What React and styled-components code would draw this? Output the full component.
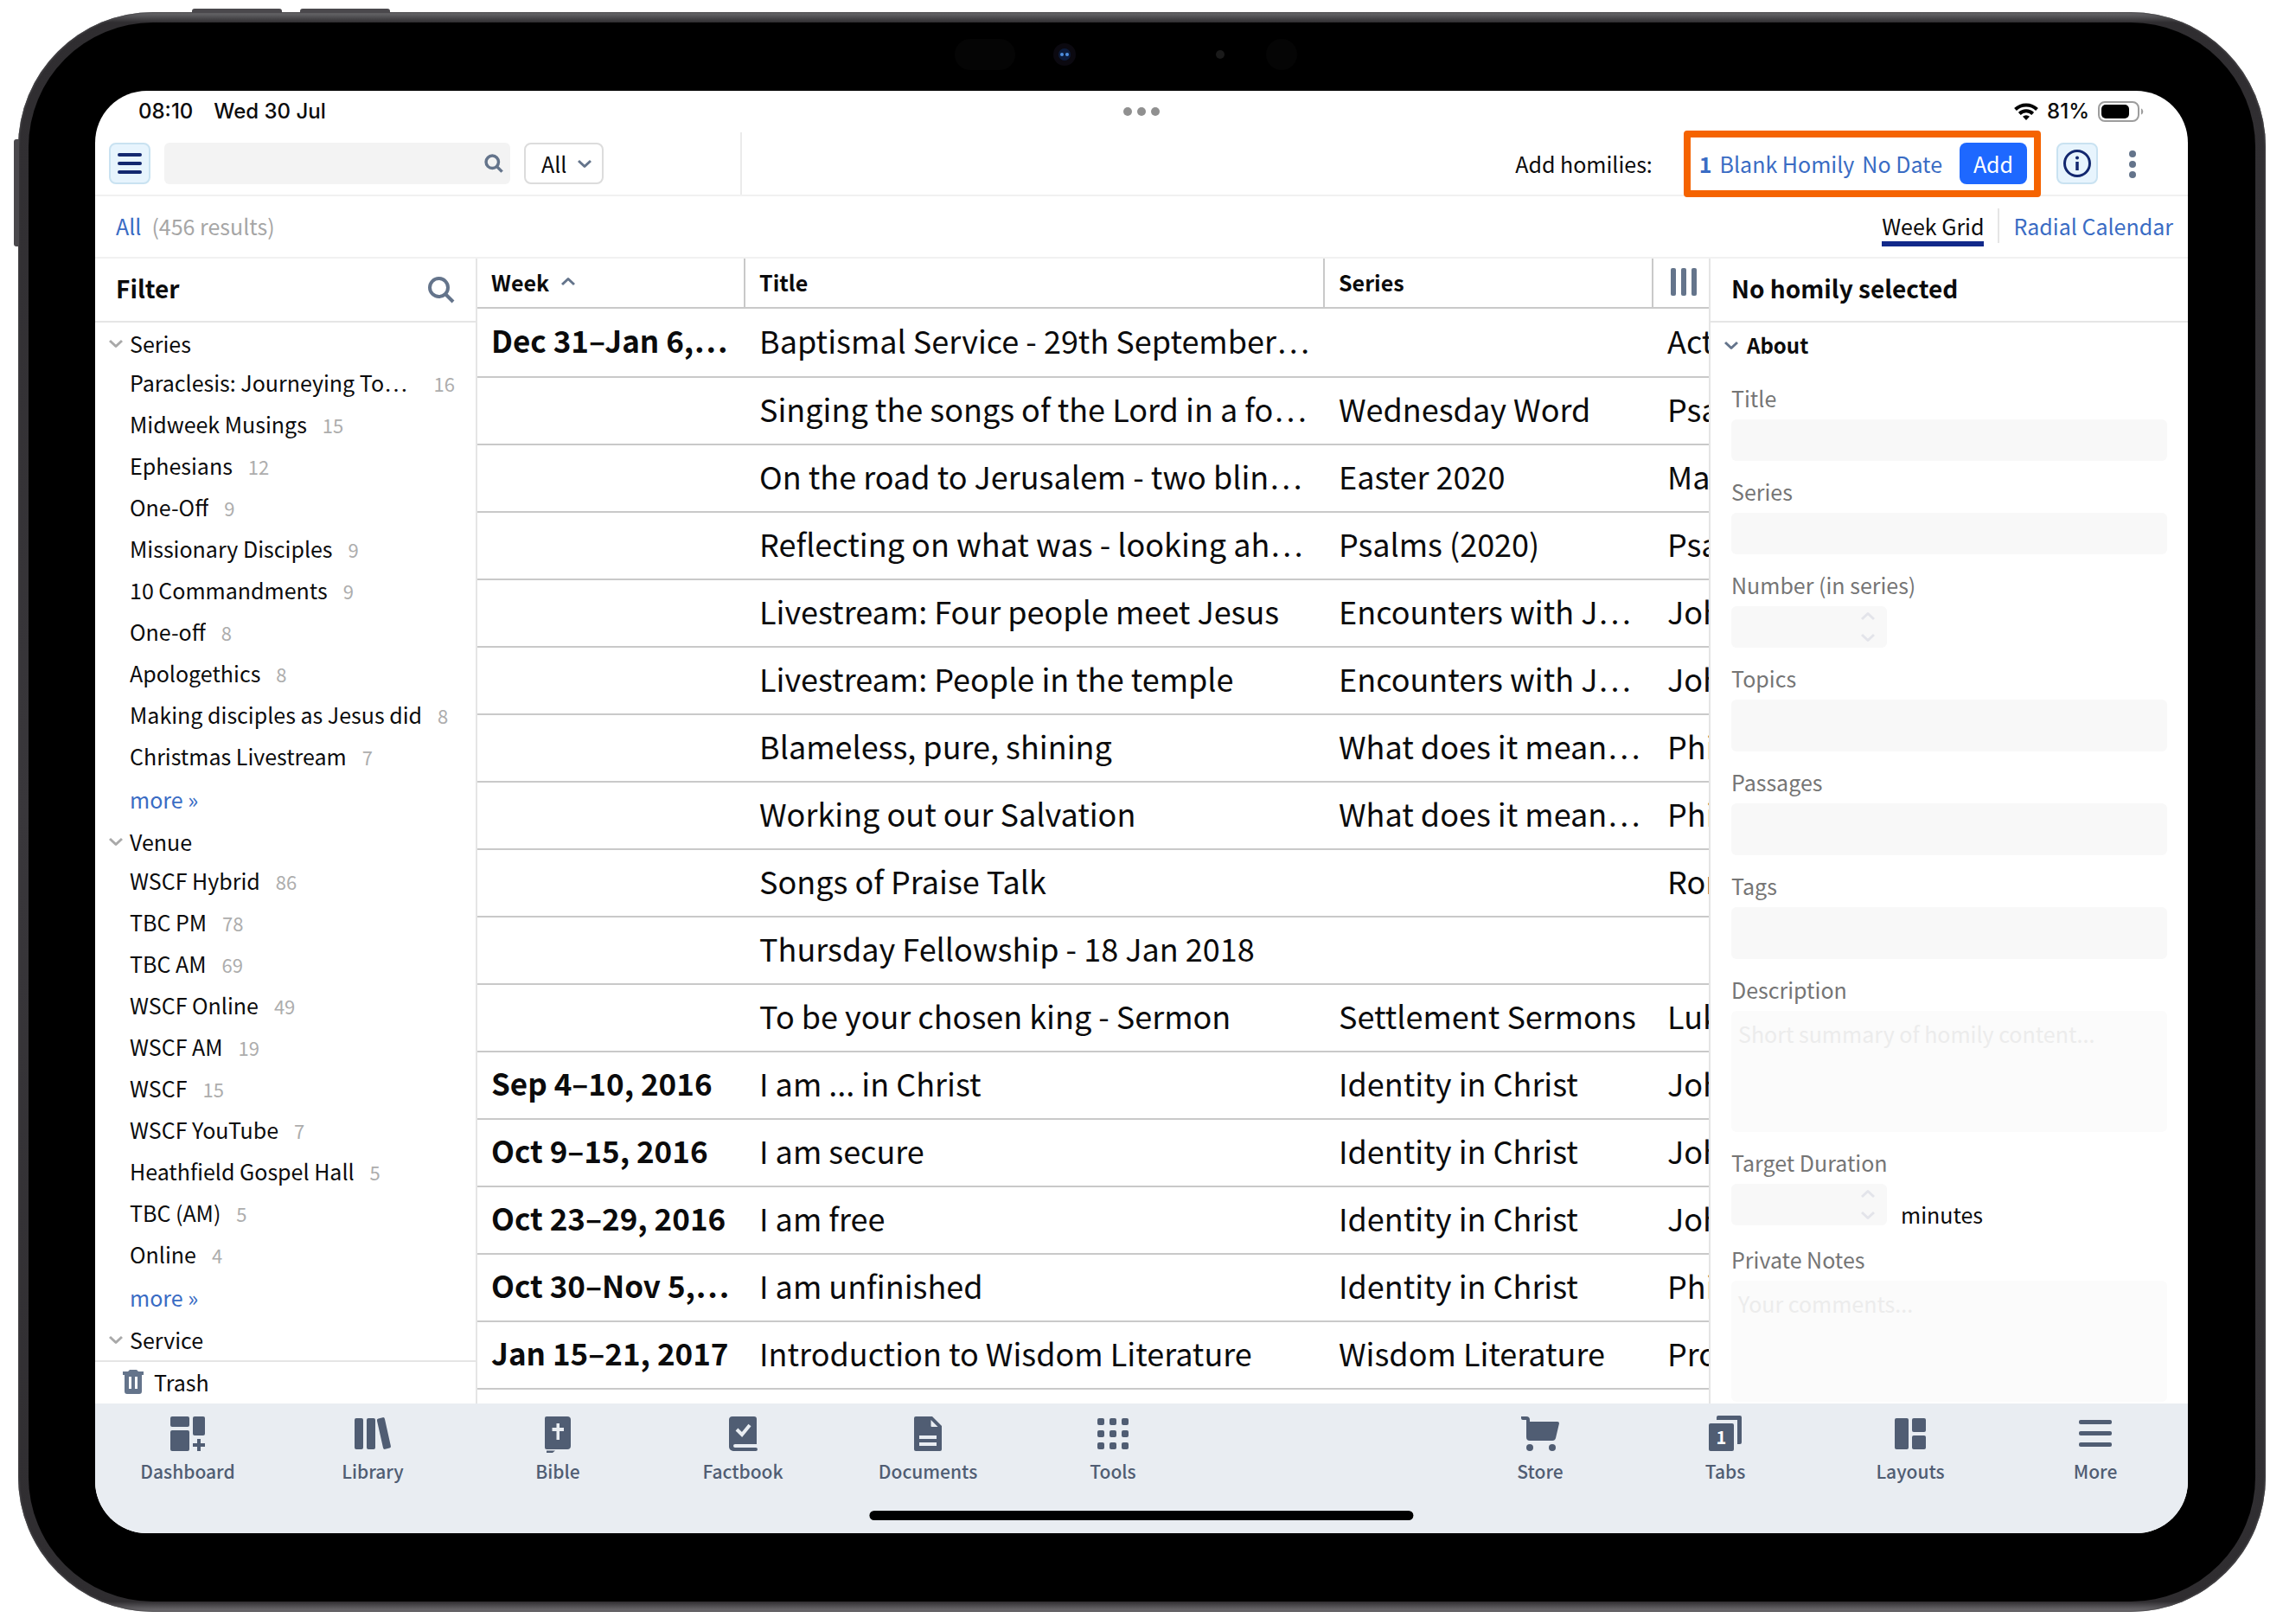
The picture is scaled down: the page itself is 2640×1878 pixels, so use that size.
import React from 'react';
import styled, { createGlobalStyle, css } from 'styled-components';

const ink = '#0b0b0c';
const slate = '#64748b';
const navSlate = '#505d73';
const link = '#3a6cc4';
const navy = '#13286f';
const line = '#e5e5e5';
const gridLine = '#c9c9c9';

const textFont = '"Noto Sans CJK KR", "Noto Sans CJK SC", "Open Sans", sans-serif';
const systemFont = 'Inter, "Liberation Sans", sans-serif';
const ellipsisFont = '"Liberation Serif", serif';

const GlobalStyle = createGlobalStyle`
  * {
    box-sizing: border-box;
  }
  body {
    margin: 0;
    background: #fff;
    color: ${ink};
    font-family: ${textFont};
    font-size: 25px;
    line-height: 36px;
  }
  button,
  input,
  select,
  textarea {
    font: inherit;
    color: inherit;
    margin: 0;
    padding: 0;
    border: 0;
    outline: 0;
    background: none;
  }
  button {
    cursor: pointer;
  }
  a {
    color: ${link};
    text-decoration: none;
  }
  svg {
    display: block;
    flex: none;
  }
`;

/* Tablet */

const Page = styled.div`
  height: 100vh;
  padding: 14px 20px 14px 21px;
`;

const Frame = styled.div`
  position: relative;
  height: 100%;
  padding: 12px;
  border-radius: 156px;
  background: linear-gradient(#6d6d70, #2f2d30 12px, #39373b 50%, #2f2d30 calc(100% - 12px), #78767a);
  box-shadow: inset 0 0 2px 1px #4c4b4e;
`;

const SideKey = styled.span`
  position: absolute;
  background: #4a484c;
  ${p =>
    p.$side === 'top'
      ? css`
          top: -4px;
          left: ${p.$at}px;
          width: 104px;
          height: 5px;
          border-radius: 3px 3px 0 0;
        `
      : css`
          left: -5px;
          top: ${p.$at}px;
          width: 6px;
          height: 124px;
          border-radius: 3px 0 0 3px;
        `};
`;

const Bezel = styled.div`
  height: 100%;
  padding: 79px 78px 79px 77px;
  border-radius: 144px;
  background: #000;
`;

const Sensors = styled.svg`
  position: absolute;
  top: 30px;
  left: 50%;
  transform: translateX(-50%);
`;

const Screen = styled.div`
  height: 100%;
  display: flex;
  flex-direction: column;
  overflow: hidden;
  border-radius: 60px;
  background: #fff;
`;

/* Status bar */

const StatusBar = styled.div`
  flex: none;
  height: 48px;
  display: grid;
  grid-template-columns: 1fr auto 1fr;
  align-items: center;
  padding: 0 50px;
  font-family: ${systemFont};
  font-size: 24px;
  font-weight: 500;
`;

const Clock = styled.div`
  display: flex;
  gap: 24px;
`;

const Power = styled.div`
  display: flex;
  align-items: center;
  justify-content: flex-end;
  gap: 10px;
`;

/* Toolbar */

const Toolbar = styled.header`
  flex: none;
  height: 74px;
  display: flex;
  align-items: center;
  padding: 0 40px 0 16px;
  border-bottom: 2px solid #f1f1f1;
`;

const ToggleButton = styled.button`
  width: 48px;
  height: 48px;
  display: flex;
  align-items: center;
  justify-content: center;
  border: 2px solid #c9e2f1;
  border-radius: 8px;
  background: #e7f4fd;
`;

const SearchBox = styled.label`
  width: 400px;
  height: 48px;
  margin: 0 16px;
  padding: 0 8px 0 12px;
  display: flex;
  align-items: center;
  border-radius: 6px;
  background: #f3f3f3;
  input {
    flex: 1;
    min-width: 0;
  }
`;

const ScopeBox = styled.div`
  display: grid;
  align-items: center;
  width: 92px;
  height: 48px;
  > * {
    grid-area: 1 / 1;
  }
  select {
    appearance: none;
    width: 100%;
    height: 100%;
    padding: 0 18px;
    border: 2px solid #dcdcdc;
    border-radius: 8px;
  }
  svg {
    justify-self: end;
    margin-right: 14px;
    pointer-events: none;
  }
`;

const ToolbarRule = styled.span`
  align-self: stretch;
  width: 2px;
  margin-left: 158px;
  background: #ebebeb;
`;

const ToolbarEnd = styled.div`
  margin-left: auto;
  display: flex;
  align-items: center;
`;

const AddGroup = styled.div`
  position: relative;
  height: 77px;
  margin: 0 18px 0 36px;
  padding: 0 8px 0 10px;
  display: flex;
  align-items: center;
  gap: 9px;
  border: 8px solid #f56300;
  border-radius: 4px;
`;

const AddButton = styled.button`
  width: 78px;
  height: 48px;
  margin-left: 11px;
  border-radius: 8px;
  background: #1e68ff;
  color: #fff;
`;

const KebabButton = styled.button`
  width: 48px;
  height: 48px;
  display: flex;
  align-items: center;
  justify-content: center;
  margin-left: 16px;
`;

/* Results bar */

const ResultsBar = styled.div`
  flex: none;
  height: 72px;
  display: flex;
  align-items: center;
  padding: 0 17px 2px 24px;
  border-bottom: 2px solid #f1f1f1;
`;

const ResultCount = styled.span`
  margin-left: 12px;
  color: #a6a6a6;
`;

const Views = styled.nav`
  margin-left: auto;
  display: flex;
  align-items: center;
`;

const ViewLink = styled.a`
  height: 48px;
  padding-top: 6px;
  ${p =>
    p.$active &&
    css`
      color: ${ink};
      background: linear-gradient(#12298a, #12298a) bottom / 100% 6px no-repeat;
    `};
`;

const ViewRule = styled.span`
  width: 2px;
  height: 40px;
  margin: 0 16px;
  background: ${line};
`;

/* Body */

const Body = styled.div`
  flex: 1;
  min-height: 0;
  display: grid;
  grid-template-columns: 442px minmax(0, 1fr) 554px;
`;

const PanelHeader = styled.div`
  flex: none;
  height: 74px;
  display: flex;
  align-items: center;
  justify-content: space-between;
  border-bottom: 2px solid ${line};
  h2 {
    margin: 0;
    padding-bottom: 4px;
    font-size: 28px;
    font-weight: 700;
  }
`;

const Sidebar = styled.aside`
  min-height: 0;
  display: flex;
  flex-direction: column;
  border-right: 2px solid ${line};
  ${PanelHeader} {
    padding: 0 24px;
  }
`;

const FilterList = styled.div`
  flex: 1;
  min-height: 0;
  overflow: hidden;
  padding: 1px 24px 0 16px;
`;

const GroupButton = styled.button`
  width: 100%;
  height: 45px;
  display: flex;
  align-items: center;
  gap: 8px;
  text-align: left;
`;

const Facets = styled.ul`
  margin: 0;
  padding: 0 0 0 24px;
  list-style: none;
`;

const Facet = styled.li`
  height: 48px;
  display: flex;
  align-items: center;
  gap: 18px;
`;

/* The truncation dots take the font and size of the outer element */
const FacetName = styled.span`
  min-width: 0;
  overflow: hidden;
  white-space: nowrap;
  text-overflow: ellipsis;
  font-family: ${ellipsisFont};
  font-size: 28px;
  span {
    font-family: ${textFont};
    font-size: 25px;
  }
`;

const FacetCount = styled.span`
  color: #adadad;
  font-size: 22px;
`;

const MoreLink = styled.a`
  height: 51px;
  padding-bottom: 2px;
  display: flex;
  align-items: center;
`;

const TrashButton = styled.button`
  flex: none;
  height: 50px;
  display: flex;
  align-items: center;
  gap: 12px;
  padding: 0 0 2px 32px;
  border-top: 2px solid ${line};
`;

const GridArea = styled.main`
  min-height: 0;
  overflow: hidden;
`;

const Table = styled.table`
  width: 100%;
  table-layout: fixed;
  border-collapse: separate;
  border-spacing: 0;
`;

const HeadCell = styled.th`
  width: ${p => p.$width || 'auto'};
  height: 58px;
  padding: ${p => (p.$last ? '0 0 2px 20px' : '0 16px 2px')};
  border-bottom: 2px solid ${gridLine};
  border-right: ${p => (p.$last ? '0' : `2px solid ${gridLine}`)};
  text-align: left;
  font-weight: 700;
`;

const HeadLabel = styled.div`
  display: flex;
  align-items: center;
  gap: 14px;
`;

const Cell = styled.td`
  height: 78px;
  padding: 0 ${p => (p.$last ? 0 : p.$strong ? 16 : 10)}px 4px 16px;
  border-bottom: 2px solid ${gridLine};
  font-family: ${ellipsisFont};
  font-size: 40px;
  line-height: 48px;
  font-weight: ${p => (p.$strong ? 700 : 400)};
  white-space: nowrap;
  overflow: hidden;
  text-overflow: ${p => (p.$last ? 'clip' : 'ellipsis')};
  span {
    font-family: ${textFont};
    font-size: ${p => (p.$strong ? 35 : 36)}px;
  }
`;

const Row = styled.tr`
  &:first-child ${Cell} {
    height: 80px;
  }
`;

const Details = styled.aside`
  min-height: 0;
  overflow: hidden;
  display: flex;
  flex-direction: column;
  border-left: 2px solid ${line};
  ${PanelHeader} {
    padding: 0 24px;
  }
`;

const AboutButton = styled.button`
  flex: none;
  height: 52px;
  display: flex;
  align-items: center;
  gap: 10px;
  padding-left: 16px;
  font-size: 24px;
  font-weight: 700;
`;

const Form = styled.form`
  padding: 0 24px;
`;

const Field = styled.div`
  padding-top: 17px;
  label {
    display: block;
    width: fit-content;
    margin-bottom: 7px;
    color: #757575;
  }
`;

const TextInput = styled.input`
  display: block;
  width: 100%;
  height: ${p => (p.$tall ? 60 : 48)}px;
  padding: 0 8px;
  border-radius: 6px;
  background: #f8f8f8;
`;

const TextArea = styled.textarea`
  display: block;
  width: 100%;
  height: 140px;
  padding: 8px;
  border-radius: 6px;
  resize: none;
  background: #fbfbfb;
  &::placeholder {
    color: #ececec;
    opacity: 1;
  }
`;

const StepperRow = styled.div`
  height: ${p => (p.$suffix ? 52 : 48)}px;
  display: flex;
  align-items: flex-start;
  gap: 16px;
  span {
    padding-top: 17px;
  }
`;

const Stepper = styled.div`
  width: 180px;
  height: 48px;
  display: flex;
  border-radius: 6px;
  background: #f8f8f8;
  input {
    flex: 1;
    min-width: 0;
    padding-left: 8px;
  }
`;

const StepButtons = styled.div`
  width: 44px;
  display: flex;
  flex-direction: column;
  button {
    flex: 1;
    display: flex;
    align-items: center;
    justify-content: center;
  }
`;

/* Tab bar */

const TabBar = styled.nav`
  flex: none;
  position: relative;
  height: 150px;
  display: flex;
  background: #e9edf2;
`;

const TabGroup = styled.div`
  flex: 0 1 ${p => p.$count * 214}px;
  display: flex;
  &:last-of-type {
    margin-left: auto;
  }
`;

const TabButton = styled.button`
  flex: 1;
  height: 108px;
  display: flex;
  flex-direction: column;
  align-items: center;
  color: ${navSlate};
  font-size: 21px;
  font-weight: 500;
  svg {
    margin: 13px 0 3px;
  }
`;

const HomeIndicator = styled.span`
  position: absolute;
  bottom: 15px;
  left: 50%;
  width: 26%;
  height: 11px;
  transform: translateX(-50%);
  border-radius: 6px;
  background: #000;
`;

/* Icons */

const Chevron = ({ up, color = slate }) => (
  <svg width="16" height="16" viewBox="0 0 16 16" fill="none" stroke={color} strokeWidth="3" strokeLinejoin="round">
    <path d={up ? 'M1 11l7-6.500 7 6.500' : 'M1 5l7 6.500L15 5'} />
  </svg>
);

const Magnifier = ({ size, stroke }) => (
  <svg width={size} height={size} viewBox="0 0 32 32" fill="none" stroke={slate} strokeWidth={stroke}>
    <circle cx="13.500" cy="13.500" r="10.500" />
    <path d="M20.500 20.500l9.500 9.500" />
  </svg>
);

const Menu = () => (
  <svg width="28" height="24" viewBox="0 0 28 24" fill={navy}>
    <rect width="28" height="4" rx="2" />
    <rect y="10" width="28" height="4" rx="2" />
    <rect y="20" width="28" height="4" rx="2" />
  </svg>
);

const Info = () => (
  <svg width="34" height="34" viewBox="0 0 34 34" fill="none" stroke={navy} strokeWidth="3">
    <circle cx="17" cy="17" r="14.500" />
    <path d="M17 15v10" strokeWidth="3.500" />
    <circle cx="17" cy="10.500" r="2" fill={navy} stroke="none" />
  </svg>
);

const Kebab = () => (
  <svg width="10" height="34" viewBox="0 0 10 34" fill={slate}>
    <circle cx="5" cy="6" r="4" />
    <circle cx="5" cy="18" r="4" />
    <circle cx="5" cy="30" r="4" />
  </svg>
);

const Columns = () => (
  <svg width="32" height="32" viewBox="0 0 32 32" fill={slate}>
    <rect width="6" height="32" rx="2" />
    <rect x="12" width="6" height="32" rx="2" />
    <rect x="24" width="6" height="32" rx="2" />
  </svg>
);

const Trash = () => (
  <svg width="24" height="28" viewBox="0 0 24 28" fill={slate}>
    <path d="M8 0h8l2 2h6v4h-2v19a3 3 0 0 1-3 3H5a3 3 0 0 1-3-3V6H0V2h6z" />
    <path d="M7 8h3v14H7zM14 8h3v14h-3z" fill="#fff" />
  </svg>
);

const Multitask = () => (
  <svg width="44" height="10" viewBox="0 0 44 10" fill="#909090">
    <circle cx="6" cy="5" r="5" />
    <circle cx="22" cy="5" r="5" />
    <circle cx="38" cy="5" r="5" />
  </svg>
);

const Wifi = () => (
  <svg width="28" height="20" viewBox="0 0 28 20" fill="none" stroke="#000" strokeWidth="4">
    <path d="M1.500 7.500a18 18 0 0 1 25 0" />
    <path d="M6.300 12.500a11 11 0 0 1 15.400 0" />
    <path d="M14 20l-4-4.200a6 6 0 0 1 8 0z" fill="#000" stroke="none" />
  </svg>
);

const Battery = () => (
  <svg width="54" height="24" viewBox="0 0 54 24">
    <rect x="1" y="1" width="46" height="22" rx="7" fill="none" stroke="#9d9d9d" strokeWidth="2" />
    <rect x="4" y="4" width="32" height="16" rx="5" fill="#000" />
    <path d="M50 8.500c3 1 3 6 0 7z" fill="#9d9d9d" />
  </svg>
);

const NavIcon = ({ name }) => (
  <svg width="44" height="44" viewBox="0 0 44 44" fill="currentColor">
    {navIcons[name]}
  </svg>
);

const navIcons = {
  Dashboard: (
    <>
      <rect x="2" y="2" width="22" height="12" rx="2" />
      <rect x="28" y="2" width="14" height="22" rx="2" />
      <rect x="2" y="18" width="22" height="24" rx="2" />
      <path d="M33 28h4v5h5v4h-5v5h-4v-5h-5v-4h5z" />
    </>
  ),
  Library: (
    <>
      <rect x="1" y="4" width="10" height="36" rx="2" />
      <rect x="15" y="4" width="10" height="36" rx="2" />
      <path d="M28.500 4.500l5-1.300a2 2 0 0 1 2.400 1.500l7 31.500a2 2 0 0 1-1.500 2.400l-5 1.200a2 2 0 0 1-2.400-1.500l-7-31.400a2 2 0 0 1 1.500-2.400z" />
    </>
  ),
  Bible: (
    <>
      <path d="M9 2h24a4 4 0 0 1 4 4v30a4 4 0 0 1-4 4H9a2 2 0 0 1-2-2V4a2 2 0 0 1 2-2z" />
      <path d="M9 41.500h10l-3 2.500H9z" />
      <path d="M20.500 10h3.500v5h5v4h-5v10h-3.500V19h-5v-4h5z" fill="#e9edf2" />
    </>
  ),
  Factbook: (
    <>
      <path d="M10 2h25a3 3 0 0 1 3 3v29H13a2 2 0 0 0 0 4h24a2 2 0 0 1 0 4H11a5 5 0 0 1-5-5V6a4 4 0 0 1 4-4z" />
      <path d="M15 17l6 6 9-11" fill="none" stroke="#e9edf2" strokeWidth="4" />
    </>
  ),
  Documents: (
    <>
      <path d="M8 2h19l11 11v27a2 2 0 0 1-2 2H8a2 2 0 0 1-2-2V4a2 2 0 0 1 2-2z" />
      <path d="M25.500 6v7a1 1 0 0 0 1 1h7z" fill="#e9edf2" />
      <path d="M12 24h20v4H12zM12 32h20v4H12z" fill="#e9edf2" />
    </>
  ),
  Tools: [4, 18, 32].map(y => [4, 18, 32].map(x => <rect key={`${x}-${y}`} x={x} y={y} width="8" height="8" rx="2" />)),
  Store: (
    <>
      <path d="M0 2h6a4 4 0 0 1 4 4v2h32a2 2 0 0 1 2 2l-4 17a4 4 0 0 1-4 3H10a4 4 0 0 1-4-4V6H2a2 2 0 0 1-2-2z" />
      <circle cx="10" cy="38" r="4" />
      <circle cx="36" cy="38" r="4" />
    </>
  ),
  Tabs: (
    <>
      <path d="M14 1h25a2 2 0 0 1 2 2v29a2 2 0 0 1-2 2h-3V6H12V3a2 2 0 0 1 2-2z" />
      <rect x="3" y="10" width="29" height="32" rx="2" />
      <text x="17.500" y="34" textAnchor="middle" fill="#fff" fontSize="20" fontWeight="700">
        1
      </text>
    </>
  ),
  Layouts: (
    <>
      <rect x="4" y="4" width="16" height="36" rx="2" />
      <rect x="24" y="4" width="16" height="16" rx="2" />
      <rect x="24" y="24" width="16" height="16" rx="2" />
    </>
  ),
  More: (
    <>
      <rect x="3" y="6" width="38" height="5" rx="2" />
      <rect x="3" y="19" width="38" height="5" rx="2" />
      <rect x="3" y="32" width="38" height="5" rx="2" />
    </>
  ),
};

/* Data */

const filterGroups = [
  {
    name: 'Series',
    facets: [
      ['Paraclesis: Journeying Together', 16],
      ['Midweek Musings', 15],
      ['Ephesians', 12],
      ['One-Off', 9],
      ['Missionary Disciples', 9],
      ['10 Commandments', 9],
      ['One-off', 8],
      ['Apologethics', 8],
      ['Making disciples as Jesus did', 8],
      ['Christmas Livestream', 7],
    ],
  },
  {
    name: 'Venue',
    facets: [
      ['WSCF Hybrid', 86],
      ['TBC PM', 78],
      ['TBC AM', 69],
      ['WSCF Online', 49],
      ['WSCF AM', 19],
      ['WSCF', 15],
      ['WSCF YouTube', 7],
      ['Heathfield Gospel Hall', 5],
      ['TBC (AM)', 5],
      ['Online', 4],
    ],
  },
  { name: 'Service', facets: [] },
];

const homilies = [
  ['Dec 31–Jan 6, 2024', 'Baptismal Service - 29th September 2024', '', 'Act'],
  ['', 'Singing the songs of the Lord in a foreign land', 'Wednesday Word', 'Psa'],
  ['', 'On the road to Jerusalem - two blind men', 'Easter 2020', 'Mat'],
  ['', 'Reflecting on what was - looking ahead', 'Psalms (2020)', 'Psa'],
  ['', 'Livestream: Four people meet Jesus', 'Encounters with Jesus', 'Joh'],
  ['', 'Livestream: People in the temple', 'Encounters with Jesus', 'Joh'],
  ['', 'Blameless, pure, shining', 'What does it mean to be', 'Phi'],
  ['', 'Working out our Salvation', 'What does it mean to be', 'Phi'],
  ['', 'Songs of Praise Talk', '', 'Rom'],
  ['', 'Thursday Fellowship - 18 Jan 2018', '', ''],
  ['', 'To be your chosen king - Sermon', 'Settlement Sermons', 'Luk'],
  ['Sep 4–10, 2016', 'I am ... in Christ', 'Identity in Christ', 'Joh'],
  ['Oct 9–15, 2016', 'I am secure', 'Identity in Christ', 'Joh'],
  ['Oct 23–29, 2016', 'I am free', 'Identity in Christ', 'Joh'],
  ['Oct 30–Nov 5, 2016', 'I am unfinished', 'Identity in Christ', 'Phi'],
  ['Jan 15–21, 2017', 'Introduction to Wisdom Literature', 'Wisdom Literature', 'Pro'],
];

const mainTabs = ['Dashboard', 'Library', 'Bible', 'Factbook', 'Documents', 'Tools'];
const endTabs = ['Store', 'Tabs', 'Layouts', 'More'];

const NumberField = ({ id, label, suffix }) => (
  <Field>
    <label htmlFor={id}>{label}</label>
    <StepperRow $suffix={suffix}>
      <Stepper>
        <input id={id} type="text" inputMode="numeric" />
        <StepButtons>
          <button type="button" aria-label={`Increase ${label}`}>
            <Chevron up color="#e3e4ea" />
          </button>
          <button type="button" aria-label={`Decrease ${label}`}>
            <Chevron color="#e3e4ea" />
          </button>
        </StepButtons>
      </Stepper>
      {suffix && <span>{suffix}</span>}
    </StepperRow>
  </Field>
);

const TextField = ({ id, label, tall }) => (
  <Field>
    <label htmlFor={id}>{label}</label>
    <TextInput id={id} type="text" $tall={tall} />
  </Field>
);

const AreaField = ({ id, label, placeholder }) => (
  <Field>
    <label htmlFor={id}>{label}</label>
    <TextArea id={id} placeholder={placeholder} />
  </Field>
);

const Tabs = ({ names }) => (
  <TabGroup $count={names.length}>
    {names.map(name => (
      <TabButton key={name} type="button">
        <NavIcon name={name} />
        {name}
      </TabButton>
    ))}
  </TabGroup>
);

const App = () => (
  <Page>
    <GlobalStyle />
    <Frame>
      <SideKey $side="top" $at={201} />
      <SideKey $side="top" $at={326} />
      <SideKey $side="left" $at={147} />
      <Sensors width="440" height="40" viewBox="0 0 440 40">
        <rect x="3" y="1" width="70" height="36" rx="18" fill="#050505" />
        <circle cx="130" cy="19" r="13" fill="#0b0910" />
        <circle cx="130" cy="19" r="7" fill="#0c1c3c" />
        <circle cx="127" cy="19" r="2" fill="#4f8fe0" />
        <circle cx="133" cy="19" r="2" fill="#4f8fe0" />
        <circle cx="310" cy="19" r="5" fill="#1a1a1a" />
        <circle cx="381" cy="19" r="18" fill="#050505" />
      </Sensors>
      <Bezel>
        <Screen>
          <StatusBar>
            <Clock>
              <span>08:10</span>
              <span>Wed 30 Jul</span>
            </Clock>
            <Multitask />
            <Power>
              <Wifi />
              81%
              <Battery />
            </Power>
          </StatusBar>

          <Toolbar>
            <ToggleButton type="button" aria-label="Toggle filters">
              <Menu />
            </ToggleButton>
            <SearchBox>
              <input type="text" aria-label="Search" />
              <Magnifier size={22} stroke={5} />
            </SearchBox>
            <ScopeBox>
              <select aria-label="Search scope">
                <option>All</option>
              </select>
              <Chevron />
            </ScopeBox>
            <ToolbarRule />
            <ToolbarEnd>
              <span>Add homilies:</span>
              <AddGroup>
                <a href="#count">
                  <b>1</b>
                </a>
                <a href="#blank">Blank Homily</a>
                <a href="#date">No Date</a>
                <AddButton type="button">Add</AddButton>
              </AddGroup>
              <ToggleButton type="button" aria-label="Homily details">
                <Info />
              </ToggleButton>
              <KebabButton type="button" aria-label="Panel menu">
                <Kebab />
              </KebabButton>
            </ToolbarEnd>
          </Toolbar>

          <ResultsBar>
            <a href="#all">All</a>
            <ResultCount>(456 results)</ResultCount>
            <Views>
              <ViewLink href="#week" $active>
                Week Grid
              </ViewLink>
              <ViewRule />
              <ViewLink href="#radial">Radial Calendar</ViewLink>
            </Views>
          </ResultsBar>

          <Body>
            <Sidebar>
              <PanelHeader>
                <h2>Filter</h2>
                <button type="button" aria-label="Find a filter">
                  <Magnifier size={32} stroke={4} />
                </button>
              </PanelHeader>
              <FilterList>
                {filterGroups.map(group => (
                  <React.Fragment key={group.name}>
                    <GroupButton type="button">
                      <Chevron color="#a9a9a9" />
                      {group.name}
                    </GroupButton>
                    {group.facets.length > 0 && (
                      <Facets>
                        {group.facets.map(([name, count]) => (
                          <Facet key={name}>
                            <FacetName>
                              <span>{name}</span>
                            </FacetName>
                            <FacetCount>{count}</FacetCount>
                          </Facet>
                        ))}
                        <li>
                          <MoreLink href="#more">more »</MoreLink>
                        </li>
                      </Facets>
                    )}
                  </React.Fragment>
                ))}
              </FilterList>
              <TrashButton type="button">
                <Trash />
                Trash
              </TrashButton>
            </Sidebar>

            <GridArea>
              <Table>
                <thead>
                  <tr>
                    <HeadCell $width="310px">
                      <HeadLabel>
                        Week
                        <Chevron up />
                      </HeadLabel>
                    </HeadCell>
                    <HeadCell>Title</HeadCell>
                    <HeadCell $width="380px">Series</HeadCell>
                    <HeadCell $width="64px" $last>
                      <Columns />
                    </HeadCell>
                  </tr>
                </thead>
                <tbody>
                  {homilies.map(([week, title, series, passage]) => (
                    <Row key={title}>
                      <Cell $strong>
                        <span>{week}</span>
                      </Cell>
                      <Cell>
                        <span>{title}</span>
                      </Cell>
                      <Cell>
                        <span>{series}</span>
                      </Cell>
                      <Cell $last>
                        <span>{passage}</span>
                      </Cell>
                    </Row>
                  ))}
                </tbody>
              </Table>
            </GridArea>

            <Details>
              <PanelHeader>
                <h2>No homily selected</h2>
              </PanelHeader>
              <AboutButton type="button">
                <Chevron />
                About
              </AboutButton>
              <Form>
                <TextField id="title" label="Title" />
                <TextField id="series" label="Series" />
                <NumberField id="number" label="Number (in series)" />
                <TextField id="topics" label="Topics" tall />
                <TextField id="passages" label="Passages" tall />
                <TextField id="tags" label="Tags" tall />
                <AreaField id="description" label="Description" placeholder="Short summary of homily content..." />
                <NumberField id="duration" label="Target Duration" suffix="minutes" />
                <AreaField id="notes" label="Private Notes" placeholder="Your comments..." />
              </Form>
            </Details>
          </Body>

          <TabBar>
            <Tabs names={mainTabs} />
            <Tabs names={endTabs} />
            <HomeIndicator />
          </TabBar>
        </Screen>
      </Bezel>
    </Frame>
  </Page>
);

export default App;
